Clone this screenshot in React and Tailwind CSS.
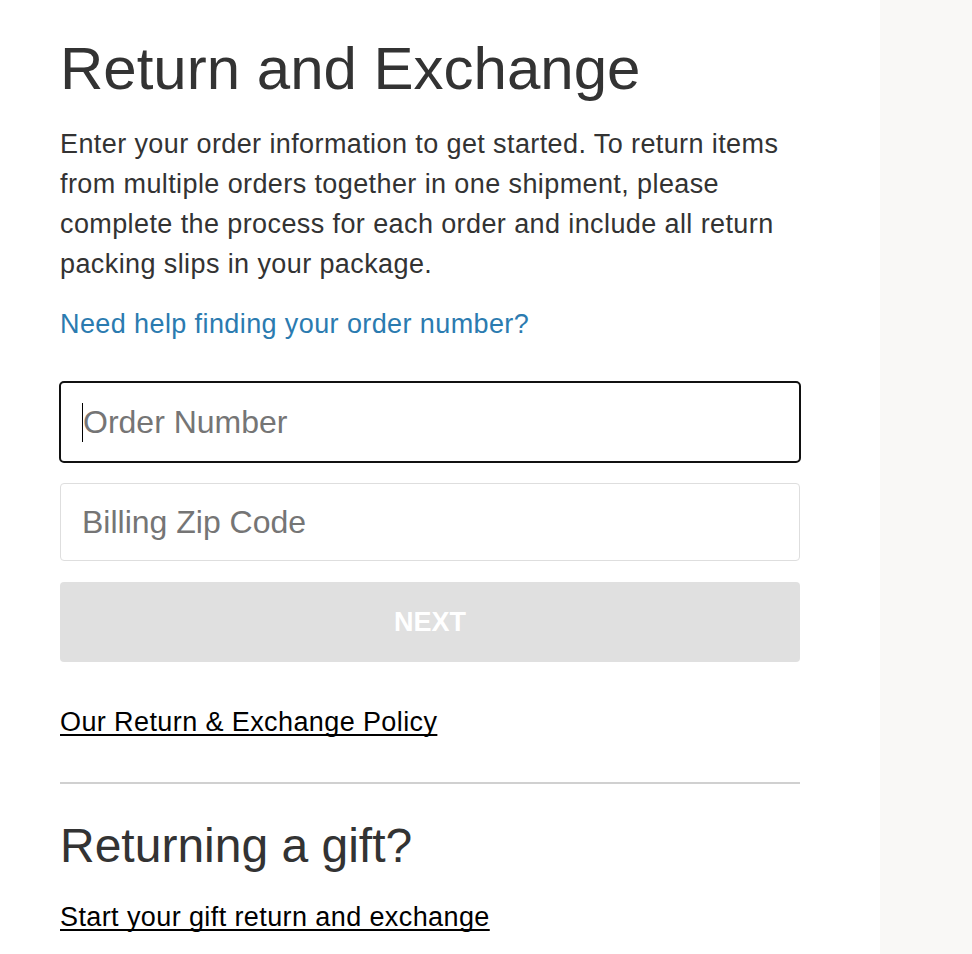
import React from 'react'

const App = () => {
    return (
        <div className="flex h-[954px] w-full overflow-hidden bg-white text-[#333]" style={{ fontFamily: '"Liberation Sans", Arial, Helvetica, sans-serif' }}>
            {/* Main form column */}
            <div className="flex-1 pl-[60px] pt-[33px]">
                <div className="w-[740px] flex flex-col">
                    <h1 className="text-[60px] leading-[72px] font-normal text-[#333]">Return and Exchange</h1>

                    <p className="mt-[19px] text-[27px] leading-[40px] tracking-[0.4px] text-[#333]">
                        Enter your order information to get started. To return items from multiple orders together in one shipment, please complete the process for each order and include all return packing slips in your package.
                    </p>

                    <a href="#" className="mt-[20px] text-[27px] leading-[40px] tracking-[0.4px] text-[#2b7bb0] self-start">
                        Need help finding your order number?
                    </a>

                    {/* Inputs */}
                    <div className="relative mt-[37px] -mx-px">
                        <input
                            type="text"
                            placeholder="Order Number"
                            className="w-full h-[82px] rounded-[5px] border-2 border-[#111] px-[22px] text-[32px] text-[#333] placeholder:text-[#757575] outline-none"
                        />
                        <span className="absolute left-[23px] top-[22px] h-[39px] w-px bg-black"></span>
                    </div>

                    <input
                        type="text"
                        placeholder="Billing Zip Code"
                        className="mt-[20px] w-full h-[78px] rounded-[4px] border border-[#dedede] px-[21px] text-[32px] text-[#333] placeholder:text-[#757575] outline-none"
                    />

                    <button className="mt-[21px] h-[80px] w-full rounded-[4px] bg-[#e0e0e0] text-[27px] font-bold text-white">
                        NEXT
                    </button>

                    <a href="#" className="mt-[40px] self-start text-[27px] leading-[40px] tracking-[0.4px] text-black underline underline-offset-[3px] [text-decoration-skip-ink:none]">
                        Our Return &amp; Exchange Policy
                    </a>

                    <hr className="mt-[40px] border-0 h-[2px] bg-[#d0d0d0]" />

                    <h2 className="mt-[32px] text-[48px] leading-[60px] font-normal text-[#333]">Returning a gift?</h2>

                    <a href="#" className="mt-[21px] self-start text-[27px] leading-[40px] tracking-[0.4px] text-black underline underline-offset-[3px] [text-decoration-skip-ink:none]">
                        Start your gift return and exchange
                    </a>
                </div>
            </div>

            {/* Right side panel */}
            <div className="w-[92px] h-full bg-[#f9f8f6]"></div>
        </div>
    )
}

export default App
